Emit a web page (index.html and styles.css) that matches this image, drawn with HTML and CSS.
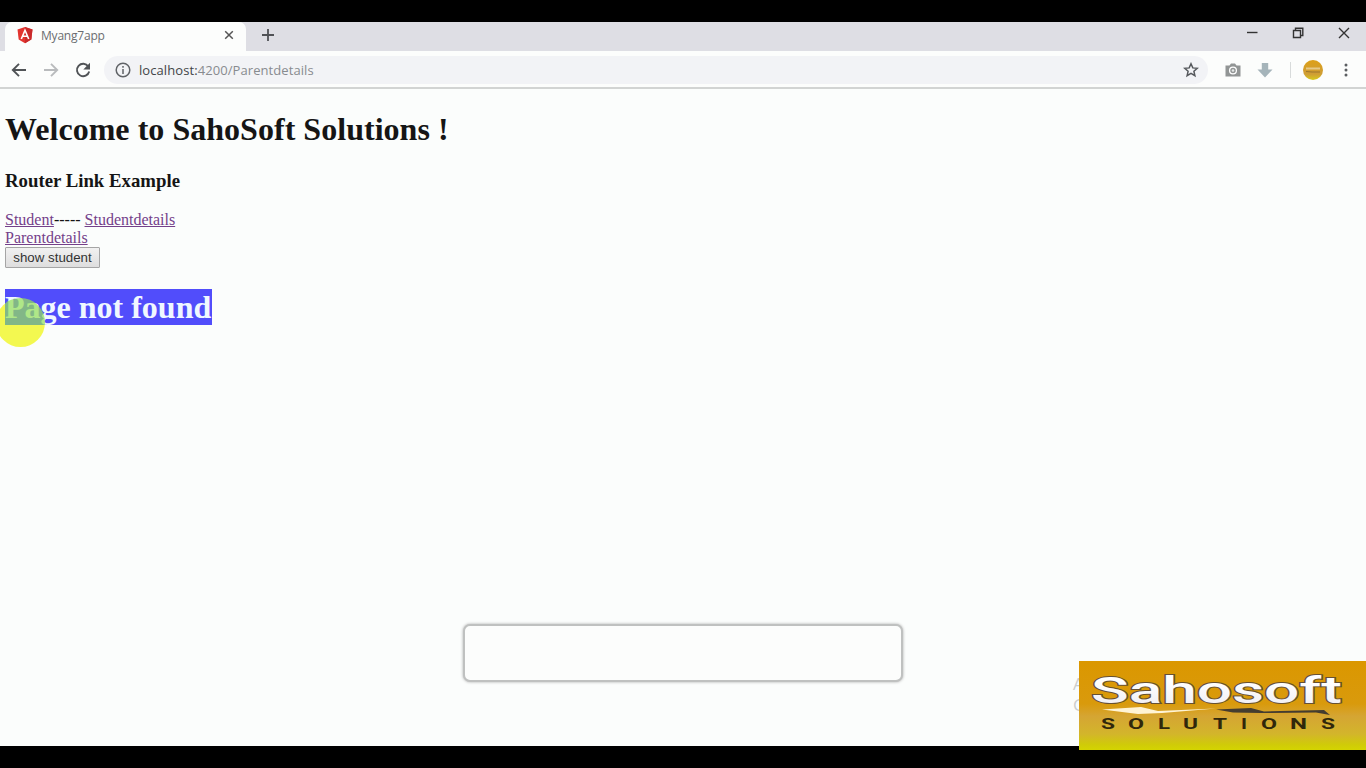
FILE: index.html
```html
<!DOCTYPE html>
<html lang="en">
<head>
<meta charset="utf-8">
<title>Myang7app</title>
<link rel="stylesheet" href="styles.css">
</head>
<body>
<div class="screen">
  <header class="tabstrip">
    <div class="tab">
      <svg class="favicon" viewBox="0 0 16 17"><path fill="#e3342f" d="M8 0l7.5 2.6-1.2 10L8 16.3l-6.300-3.700L.5 2.600z"/><path fill="#c92a2b" d="M8 0l7.500 2.600-1.200 10L8 16.300z"/><path fill="none" stroke="#fff" stroke-width="1.600" d="M4.300 12L8 3.200l3.700 8.800M5.800 9.300h4.400"/></svg>
      <span class="tab-title">Myang7app</span>
      <svg class="tab-close" viewBox="0 0 10 10"><path d="M1.200 1.200l7.600 7.600M8.800 1.200L1.200 8.800"/></svg>
    </div>
    <svg class="new-tab" viewBox="0 0 12 12"><path d="M6 0v12M0 6h12"/></svg>
    <div class="window-controls">
      <svg viewBox="0 0 14 14"><path d="M2 6.500h10.500"/></svg>
      <svg viewBox="0 0 14 14"><path d="M2.500 4.500h7v7h-7zM4.500 4V2.200h7.300v7.300H10"/></svg>
      <svg viewBox="0 0 14 14"><path d="M2 2l10 10M12 2L2 12"/></svg>
    </div>
  </header>
  <nav class="toolbar">
    <svg class="nav-icon back" viewBox="0 0 16 16"><path d="M15 8H2M8 1.800L1.800 8 8 14.200"/></svg>
    <svg class="nav-icon forward" viewBox="0 0 16 16"><path d="M1 8h13M8 1.800L14.200 8 8 14.200"/></svg>
    <svg class="nav-icon reload" viewBox="0 0 16 16"><path d="M13.300 4.500A6.200 6.200 0 1 0 14.200 9.500"/><path class="solid" d="M15 .8v6.700H8.300z"/></svg>
    <div class="omnibox">
      <svg class="info" viewBox="0 0 16 16"><circle cx="8" cy="8" r="6.800"/><path d="M8 7v5M8 4v1.800"/></svg>
      <span class="url">localhost:<span class="path">4200/Parentdetails</span></span>
      <svg class="star" viewBox="0 0 16 16"><path d="M8 1.800l1.800 4.100 4.500.4-3.400 3 1 4.400L8 11.400l-3.900 2.300 1-4.400-3.400-3 4.500-.4z"/></svg>
    </div>
    <svg class="camera" viewBox="0 0 16 16"><path fill="#929595" d="M.5 3.500h4L6 1.500h4l1.500 2h4v11H.5z"/><circle cx="8" cy="8.500" r="3.400" fill="#929595" stroke="#fff" stroke-width="1.300"/><circle cx="8" cy="8.500" r="1.300" fill="#e5e8e7"/></svg>
    <svg class="download" viewBox="0 0 16 16"><path d="M4.800 1h6.400v6.500H15.500L8 15.500.5 7.500h4.300z"/></svg>
    <span class="divider"></span>
    <svg class="avatar" viewBox="0 0 20 20"><defs><linearGradient id="gold" x2="0" y2="1"><stop stop-color="#dda018"/><stop offset=".7" stop-color="#cf9d35"/><stop offset="1" stop-color="#d7ca1b"/></linearGradient></defs><circle cx="10" cy="10" r="10" fill="url(#gold)"/><path d="M3 8.500h14" stroke="#e6c987" stroke-width="2"/><path d="M3 11.500l6 .5h8" fill="none" stroke="#9b762f" stroke-width="1.200"/></svg>
    <svg class="more" viewBox="0 0 4 14"><circle cx="2" cy="2" r="1.500"/><circle cx="2" cy="7" r="1.500"/><circle cx="2" cy="12" r="1.500"/></svg>
  </nav>
  <main class="page">
    <h1 class="welcome">Welcome to SahoSoft Solutions !</h1>
    <h3 class="subtitle">Router Link Example</h3>
    <div class="links"><a>Student</a>----- <a class="details">Studentdetails</a><br><a class="parent">Parentdetails</a></div>
    <button class="show">show student</button>
    <h1 class="missing"><span class="selected">Page not found</span></h1>
  </main>
  <div class="pointer-halo"></div>
  <div class="caption-box"></div>
  <div class="watermark"><span>A</span><span>G</span></div>
  <svg class="brand" viewBox="0 0 288 89">
    <defs>
      <linearGradient id="panel" x2="0" y2="1"><stop stop-color="#db9700"/><stop offset=".48" stop-color="#d99a0c"/><stop offset=".62" stop-color="#d5a533"/><stop offset=".82" stop-color="#d3b52b"/><stop offset=".94" stop-color="#d0cb08"/><stop offset="1" stop-color="#d4d400"/></linearGradient>
      <linearGradient id="letters" x2="0" y2="1"><stop offset=".3" stop-color="#fff"/><stop offset="1" stop-color="#eceaf2"/></linearGradient>
    </defs>
    <rect width="288" height="89" fill="url(#panel)"/>
    <text class="brand-name" x="12" y="42" textLength="251" lengthAdjust="spacingAndGlyphs">Sahosoft</text>
    <path fill="#fff4d5" d="M23 48.500L62 46l17 4 58-2.500-54 4.500-24 1z"/>
    <path fill="#443c30" d="M137 48.500l35-1.500 13 3.500 60-1.500 6 5-14-2.500-55 .5-28-.5z"/>
    <g class="brand-sub"><text x="22" y="68" textLength="14" lengthAdjust="spacingAndGlyphs">S</text><text x="49" y="68" textLength="16" lengthAdjust="spacingAndGlyphs">O</text><text x="79" y="68" textLength="12" lengthAdjust="spacingAndGlyphs">L</text><text x="104" y="68" textLength="15" lengthAdjust="spacingAndGlyphs">U</text><text x="134" y="68" textLength="14" lengthAdjust="spacingAndGlyphs">T</text><text x="162" y="68" textLength="6" lengthAdjust="spacingAndGlyphs">I</text><text x="182" y="68" textLength="16" lengthAdjust="spacingAndGlyphs">O</text><text x="211" y="68" textLength="17" lengthAdjust="spacingAndGlyphs">N</text><text x="242" y="68" textLength="14" lengthAdjust="spacingAndGlyphs">S</text></g>
  </svg>
</div>
</body>
</html>
```
FILE: styles.css
```css
* { box-sizing: border-box; }
body { margin: 0; background: #000; }
svg { display: block; flex: none; }
.screen { position: relative; display: flex; flex-direction: column; width: 1366px; height: 768px; padding: 22px 0; overflow: hidden; background: #000; }
.tabstrip { display: flex; align-items: flex-start; height: 29px; flex: none; background: #dedee4; }
.tab { display: flex; align-items: center; width: 241px; height: 29px; margin-left: 5px; padding: 0 12px 3px; background: #fcfdfc; border-radius: 7px 7px 0 0; font: 12px "Open Sans", sans-serif; color: #6b6d70; }
.favicon { width: 16px; height: 17px; }
.tab-title { margin-left: 8px; letter-spacing: -.2px; }
.tab-close { width: 10px; height: 10px; margin-left: auto; fill: none; stroke: #555; stroke-width: 1.5; }
.new-tab { width: 12px; height: 12px; margin: 7px 0 0 16px; fill: none; stroke: #505256; stroke-width: 1.8; }
.window-controls { display: flex; gap: 32px; margin: 4px 15px 0 auto; fill: none; stroke: #333; stroke-width: 1.4; }
.window-controls svg { width: 14px; height: 14px; }
.toolbar { display: flex; align-items: center; height: 38px; flex: none; padding: 2px 18px 0 11px; background: #fcfdfc; border-bottom: 2px solid #d2d4d3; }
.nav-icon { width: 16px; height: 16px; margin-right: 16px; fill: none; stroke: #505356; stroke-width: 1.9; }
.forward { stroke: #b9bbbd; }
.reload { margin-right: 13px; }
.solid { fill: #505356; stroke: none; }
.omnibox { display: flex; align-items: center; width: 1104px; height: 28px; padding: 0 9px 0 11px; border-radius: 14px; background: #f2f3f6; }
.info { width: 16px; height: 16px; fill: none; stroke: #606367; stroke-width: 1.5; }
.url { margin-left: 8px; font: 13px "Open Sans", sans-serif; letter-spacing: .08px; color: #424548; white-space: nowrap; }
.path { color: #888b8f; }
.star { width: 16px; height: 16px; margin-left: auto; fill: none; stroke: #55585c; stroke-width: 1.5; }
.camera { width: 16px; height: 16px; margin-left: 17px; }
.download { width: 16px; height: 16px; margin-left: 16px; fill: #a5b4ba; }
.divider { width: 1px; height: 16px; margin-left: 17px; background: #d8dbdb; }
.avatar { width: 20px; height: 20px; margin-left: 12px; }
.more { width: 4px; height: 14px; margin-left: auto; fill: #5b5e61; }
.page { flex: 1; padding: 22px 5px 0; background: #fbfdfc; color: #151515; font: 16px/18px "Liberation Serif", serif; }
.welcome { margin: 0; font-size: 32px; line-height: 37px; letter-spacing: .03px; white-space: nowrap; }
.subtitle { margin: 22px 0 19px; font-size: 18.800px; line-height: 22px; }
.links { height: 36px; }
.links a { color: #74408a; text-decoration: underline; }
.show { display: block; width: 95px; height: 21px; margin: 0; padding: 0; border: 1px solid #a5a5a5; border-radius: 1px; background: linear-gradient(#f1f1f1, #dedede); color: #333; font: 13.300px "Liberation Sans", sans-serif; white-space: nowrap; }
.missing { margin: 21px 0 0; font-size: 32px; line-height: 37px; }
.selected { position: relative; z-index: 2; display: inline-block; width: 207px; height: 36px; overflow: hidden; background: #514dfb; color: #f0f8ff; white-space: nowrap; }
.selected::after { content: ""; position: absolute; left: -9px; top: 9px; width: 49px; height: 49px; border-radius: 50%; background: rgba(150, 225, 90, .72); }
.pointer-halo { position: absolute; left: -4px; top: 298px; width: 49px; height: 49px; border-radius: 50%; background: #f3f850; }
.caption-box { position: absolute; left: 463px; top: 624px; width: 440px; height: 58px; border: 2px solid #bfc1c0; border-radius: 7px; box-shadow: 0 0 3px #aaa; background: #fcfdfc; }
.watermark { position: absolute; left: 1073px; top: 673px; display: flex; flex-direction: column; font: 17px/21px "Open Sans", sans-serif; color: #cbcdcc; }
.brand { position: absolute; left: 1079px; top: 661px; width: 288px; height: 89px; }
.brand-name { font: 500 37px Roboto, sans-serif; fill: url(#letters); stroke: #665033; stroke-width: 2px; paint-order: stroke; }
.brand-sub { font: bold 14px Roboto, sans-serif; fill: #30270b; }
```
